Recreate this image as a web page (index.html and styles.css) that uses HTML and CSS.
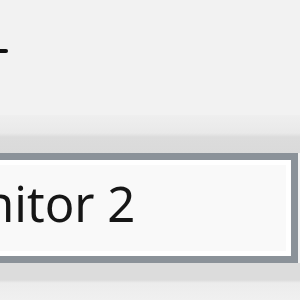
FILE: index.html
```html
<!DOCTYPE html>
<html>
<head>
<meta charset="utf-8">
<link rel="stylesheet" href="styles.css">
</head>
<body>
<div class="page">
  <div class="top">
    <span class="dash"></span>
  </div>
  <div class="band"></div>
  <div class="field">
    <div class="field-inner">
      <span class="value">Monitor 2</span>
    </div>
  </div>
  <div class="footer"></div>
</div>
</body>
</html>
```
FILE: styles.css
```css
html, body {
  margin: 0;
  padding: 0;
  width: 300px;
  height: 300px;
  overflow: hidden;
  background: #f2f2f2;
}
.page {
  display: flex;
  flex-direction: column;
  width: 300px;
  height: 300px;
}
.top {
  height: 115px;
  display: flex;
  align-items: flex-start;
}
.dash {
  display: block;
  width: 8px;
  height: 4px;
  margin-top: 49px;
  background: #111;
  border-radius: 0 2px 2px 0;
  filter: blur(0.7px);
}
.band {
  height: 38px;
  background: linear-gradient(#efefef 0px, #e9e9e9 18px, #dcdcdc 22px, #dadada 38px);
}
.field {
  margin-left: -20px;
  margin-right: 2px;
  border: 7px solid #8b9299;
  box-sizing: border-box;
  background: #ffffff;
  padding: 5px;
  height: 110px;
}
.field-inner {
  height: 100%;
  background: #f9f9f9;
  display: flex;
  align-items: center;
  overflow: hidden;
}
.value {
  font-family: "Noto Sans", "Open Sans", sans-serif;
  font-size: 49px;
  color: #161616;
  white-space: nowrap;
  margin-left: -82px;
  margin-top: -10px;
  line-height: 1;
}
.footer {
  flex: 1;
  background: linear-gradient(#dcdcdc 0px, #dcdcdc 17px, #ececec 20px, #f0f0f0 37px);
}
```
